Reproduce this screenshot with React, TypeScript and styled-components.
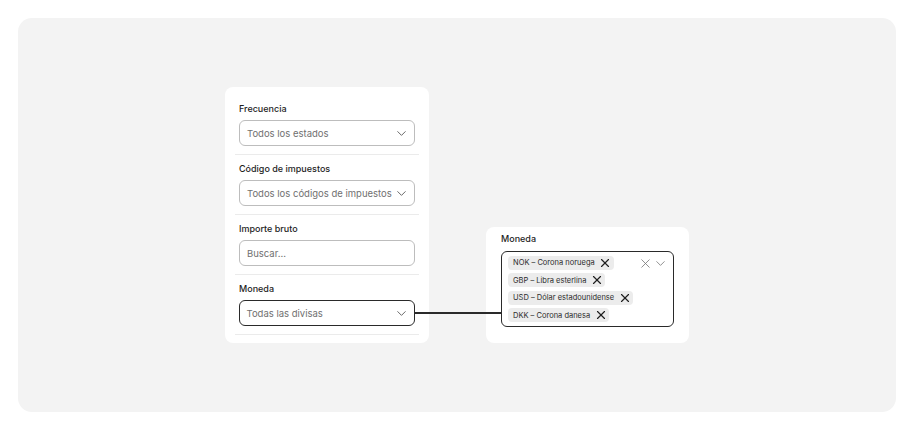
import React from 'react';
import styled, {createGlobalStyle} from 'styled-components';
import {ChevronDown, X} from 'lucide-react';

const GlobalStyle = createGlobalStyle`
  html, body {
    margin: 0;
    padding: 0;
    background: #ffffff;
    font-family: Inter, "Noto Sans", sans-serif;
    -webkit-font-smoothing: antialiased;
  }
  * {
    box-sizing: border-box;
  }
`;

interface IFilter {
    label: string;
    placeholder: string;
    kind: 'select' | 'search';
    active?: boolean;
}

const filters: IFilter[] = [
    {label: 'Frecuencia', placeholder: 'Todos los estados', kind: 'select'},
    {label: 'Código de impuestos', placeholder: 'Todos los códigos de impuestos', kind: 'select'},
    {label: 'Importe bruto', placeholder: 'Buscar...', kind: 'search'},
    {label: 'Moneda', placeholder: 'Todas las divisas', kind: 'select', active: true},
];

const currencies = [
    'NOK – Corona noruega',
    'GBP – Libra esterlina',
    'USD – Dólar estadounidense',
    'DKK – Corona danesa',
];

const App: React.FC = () => {
    return (
        <>
            <GlobalStyle/>
            <Canvas>
                <Row>
                    <FilterPanel>
                        {filters.map((filter, idx) => (
                            <FilterSection key={idx}>
                                <FieldLabel>{filter.label}</FieldLabel>
                                <SelectBox active={filter.active}>
                                    <SelectText>{filter.placeholder}</SelectText>
                                    {filter.kind === 'select' ? (
                                        <ChevronDown size={15} strokeWidth={1.4} color="#555"/>
                                    ) : null}
                                </SelectBox>
                            </FilterSection>
                        ))}
                    </FilterPanel>
                    <Connector/>
                    <DetailPanel>
                        <FieldLabel>Moneda</FieldLabel>
                        <MultiBox>
                            <TagList>
                                {currencies.map((currency) => (
                                    <Tag key={currency}>
                                        {currency}
                                        <X size={14} strokeWidth={2} color="#1f1f1f"/>
                                    </Tag>
                                ))}
                            </TagList>
                            <BoxActions>
                                <X size={15} strokeWidth={1.3} color="#777"/>
                                <ChevronDown size={15} strokeWidth={1.3} color="#777"/>
                            </BoxActions>
                        </MultiBox>
                    </DetailPanel>
                </Row>
            </Canvas>
        </>
    );
};

export default App;

const Canvas = styled.div`
  margin: 18px;
  width: 878px;
  height: 394px;
  background: #f3f3f3;
  border-radius: 14px;
  display: flex;
  align-items: center;
  justify-content: center;
`;

const Row = styled.div`
  position: relative;
  display: flex;
  align-items: flex-end;
  gap: 57px;
`;

const FilterPanel = styled.div`
  width: 204px;
  background: #ffffff;
  border-radius: 8px;
  padding: 8px 10px;
  display: flex;
  flex-direction: column;
`;

const FilterSection = styled.div`
  padding: 6px 4px 8px;
  border-bottom: 1px solid #ebebeb;
  display: flex;
  flex-direction: column;
`;

const FieldLabel = styled.div`
  font-size: 9px;
  line-height: 15px;
  font-weight: 500;
  color: #1e1e1e;
  margin-bottom: 4px;
`;

const SelectBox = styled.div<{active?: boolean}>`
  height: 26px;
  border-radius: 6px;
  border: ${p => p.active ? '1.5px solid #2a2a2a' : '1px solid #bdbdbd'};
  padding: 0 5px 0 ${p => p.active ? '6.5px' : '7px'};
  display: flex;
  align-items: center;
  justify-content: space-between;
  background: #ffffff;
`;

const SelectText = styled.span`
  font-size: 9.5px;
  color: #707070;
  white-space: nowrap;
`;

const Connector = styled.div`
  position: absolute;
  left: 190px;
  top: 225px;
  width: 86px;
  height: 1.5px;
  background: #2a2a2a;
`;

const DetailPanel = styled.div`
  width: 203px;
  background: #ffffff;
  border-radius: 8px;
  padding: 4px 15px 16px;
  display: flex;
  flex-direction: column;

  & > ${FieldLabel} {
    margin-bottom: 5px;
  }
`;

const MultiBox = styled.div`
  border: 1.5px solid #2a2a2a;
  border-radius: 6px;
  padding: 4px 5px 4px 6px;
  display: flex;
  justify-content: space-between;
  align-items: flex-start;
`;

const TagList = styled.div`
  display: flex;
  flex-direction: column;
  align-items: flex-start;
  gap: 3.5px;
`;

const Tag = styled.div`
  height: 14px;
  padding: 0 1.5px 0 5px;
  border-radius: 4px;
  background: #ececec;
  display: flex;
  align-items: center;
  gap: 3.5px;
  font-size: 7.5px;
  color: #2b2b2b;
  white-space: nowrap;
`;

const BoxActions = styled.div`
  display: flex;
  align-items: center;
`;
